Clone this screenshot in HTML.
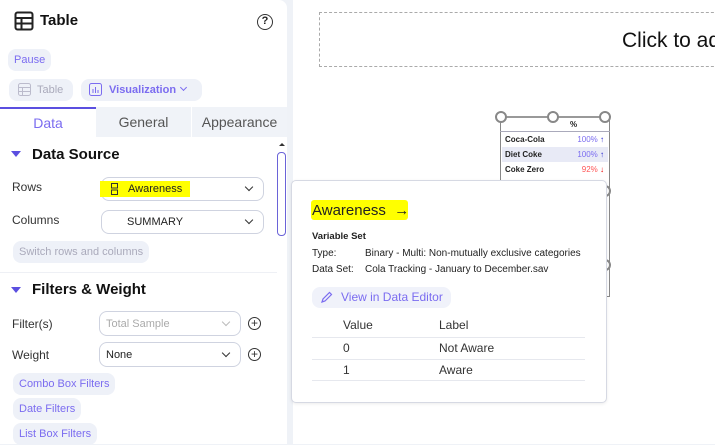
<!DOCTYPE html>
<html><head><style>
*{box-sizing:border-box;margin:0;padding:0}
body{width:715px;height:444px;overflow:hidden;background:#eff2f7;font-family:"Liberation Sans",sans-serif;position:relative;color:#222}
.abs{position:absolute}
.panel{left:0;top:0;width:287px;height:444px;background:#fff;border-radius:0 8px 0 0}
.canvas{left:293px;top:0;width:422px;height:444px;background:#fff}
.chip{position:absolute;background:#eef1f8;border-radius:8px;font-size:11px;color:#7b6cf0;padding:0 6px;line-height:22px}
.sel{position:absolute;border:1px solid #cfd3e0;border-radius:8px;height:24px;font-size:11px;line-height:22px;background:#fff}
.chev{position:absolute;right:11px;top:6px;width:6px;height:6px;border-right:1.5px solid #333;border-bottom:1.5px solid #333;transform:rotate(45deg)}
.lbl{position:absolute;font-size:12px;color:#333}
.plus{position:absolute;width:13px;height:13px;border:1.5px solid #333;border-radius:50%;font-size:12px;line-height:10px;text-align:center;color:#333}
.h{position:absolute;font-size:15px;font-weight:bold;color:#111}
.tri{position:absolute;width:0;height:0;border-left:5px solid transparent;border-right:5px solid transparent;border-top:6px solid #5b4fe0}
.hd{position:absolute;width:12px;height:12px;border:2px solid #888;border-radius:50%;background:#fff}
</style></head><body>
<div class="abs panel">
  <svg class="abs" style="left:14px;top:11px" width="20" height="20" viewBox="0 0 20 20"><rect x="1.5" y="1.5" width="17" height="17" rx="2" fill="none" stroke="#222" stroke-width="2"/><line x1="1.5" y1="7" x2="18.5" y2="7" stroke="#222" stroke-width="2"/><line x1="1.5" y1="12.5" x2="18.5" y2="12.5" stroke="#222" stroke-width="2"/><line x1="7.5" y1="7" x2="7.5" y2="18.5" stroke="#222" stroke-width="2"/></svg>
  <div class="abs" style="left:40px;top:12px;font-size:15px;font-weight:bold;color:#111">Table</div>
  <div class="abs" style="left:257px;top:14px;width:16px;height:16px;border:1.5px solid #333;border-radius:50%;font-size:11px;text-align:center;line-height:13px;font-weight:bold">?</div>
  <div class="chip" style="left:8px;top:49px;height:22px">Pause</div>
  <div class="chip" style="left:9px;top:79px;color:#aab;padding-left:28px;padding-right:10px;height:22px">Table</div>
  <svg class="abs" style="left:18px;top:83px" width="13" height="13"><rect x=".5" y=".5" width="12" height="12" rx="2" fill="none" stroke="#bbc"/><line x1="0" y1="4.5" x2="13" y2="4.5" stroke="#bbc"/><line x1="0" y1="8.5" x2="13" y2="8.5" stroke="#bbc"/><line x1="4.5" y1="4" x2="4.5" y2="13" stroke="#bbc"/></svg>
  <div class="chip" style="left:81px;top:79px;padding-left:28px;padding-right:26px;font-weight:bold;height:22px">Visualization</div>
  <svg class="abs" style="left:89px;top:83px" width="13" height="13"><rect x=".5" y=".5" width="12" height="12" rx="2" fill="none" stroke="#7b6cf0"/><line x1="4" y1="6" x2="4" y2="10" stroke="#7b6cf0"/><line x1="6.5" y1="4" x2="6.5" y2="10" stroke="#7b6cf0"/><line x1="9" y1="7" x2="9" y2="10" stroke="#7b6cf0"/></svg>
  <div class="abs" style="left:181px;top:85px;width:5px;height:5px;border-right:1.5px solid #7b6cf0;border-bottom:1.5px solid #7b6cf0;transform:rotate(45deg)"></div>
  <div class="abs" style="left:0;top:107px;width:96px;height:30px;border-top:2px solid #5b4fe0;background:#fff;font-size:14px;color:#7b6cf0;text-align:center;line-height:28px">Data</div>
  <div class="abs" style="left:96px;top:107px;width:95px;height:30px;background:#f0f3f8;font-size:14px;color:#555;text-align:center;line-height:30px">General</div>
  <div class="abs" style="left:192px;top:107px;width:95px;height:30px;background:#f0f3f8;font-size:14px;color:#555;text-align:center;line-height:30px">Appearance</div>
  <div class="abs" style="left:277px;top:140px;width:10px;height:150px"><div style="position:absolute;top:3px;width:0;height:0;border-left:3px solid transparent;border-right:3px solid transparent;border-bottom:3px solid #333;left:2px"></div><div style="position:absolute;left:0;top:12px;width:9px;height:84px;border:1.5px solid #6a63d8;border-radius:4px"></div></div>
  <div class="tri" style="left:11px;top:151px"></div>
  <div class="h" style="left:32px;top:146px">Data Source</div>
  <div class="lbl" style="left:12px;top:180px">Rows</div>
  <div class="sel" style="left:101px;top:177px;width:163px"><span style="position:absolute;left:-2px;top:3px;width:90px;height:16px;background:#ff0;"></span><svg style="position:absolute;left:9px;top:5px" width="7" height="12"><rect x=".5" y=".5" width="6" height="4.5" fill="none" stroke="#333"/><rect x=".5" y="7" width="6" height="4.5" fill="none" stroke="#333"/></svg><span style="position:absolute;left:26px;color:#222">Awareness</span><div class="chev"></div></div>
  <div class="lbl" style="left:12px;top:213px">Columns</div>
  <div class="sel" style="left:101px;top:210px;width:163px"><span style="position:absolute;left:25px;color:#222">SUMMARY</span><div class="chev"></div></div>
  <div class="chip" style="left:13px;top:241px;color:#aab;height:22px">Switch rows and columns</div>
  <div class="abs" style="left:0;top:272px;width:277px;height:1px;background:#eef0f5"></div>
  <div class="tri" style="left:11px;top:287px"></div>
  <div class="h" style="left:32px;top:281px">Filters &amp; Weight</div>
  <div class="lbl" style="left:12px;top:317px">Filter(s)</div>
  <div class="sel" style="left:99px;top:311px;width:142px;height:25px"><span style="position:absolute;left:6px;top:1px;color:#aaa">Total Sample</span><div class="chev" style="border-color:#bbb;top:7px"></div></div>
  <div class="plus" style="left:248px;top:317px">+</div>
  <div class="lbl" style="left:12px;top:348px">Weight</div>
  <div class="sel" style="left:99px;top:342px;width:142px;height:25px"><span style="position:absolute;left:6px;top:1px;color:#222">None</span><div class="chev" style="top:7px"></div></div>
  <div class="plus" style="left:248px;top:348px">+</div>
  <div class="chip" style="left:13px;top:373px">Combo Box Filters</div>
  <div class="chip" style="left:13px;top:398px">Date Filters</div>
  <div class="chip" style="left:13px;top:423px">List Box Filters</div>
</div>
<div class="abs canvas"></div>
<div class="abs" style="left:319px;top:12px;width:420px;height:55px;border:1px dashed #aaa"></div>
<div class="abs" style="left:622px;top:29px;font-size:21px;color:#111;white-space:nowrap">Click to add</div>
<div class="abs" style="left:500px;top:117px;width:110px;height:180px;border:1px solid #888;background:#fff"></div>
<div class="abs" style="left:507px;top:116px;width:96px;height:2px;background:#999"></div>
<div class="abs" style="left:500px;top:131px;width:110px;height:1px;background:#aab"></div>
<div class="abs" style="left:502px;top:132px;width:106px;font-size:8px;font-weight:bold">
 <div style="height:15px;line-height:15px;padding-left:3px">Coca-Cola<span style="float:right;font-weight:normal;color:#7b6cf0;margin-right:4px">100% <b style="color:#22c">↑</b></span></div>
 <div style="height:15px;line-height:15px;padding-left:3px;background:#e8eaf6">Diet Coke<span style="float:right;font-weight:normal;color:#7b6cf0;margin-right:4px">100% <b style="color:#22c">↑</b></span></div>
 <div style="height:15px;line-height:15px;padding-left:3px">Coke Zero<span style="float:right;font-weight:normal;color:#f55;margin-right:4px">92% <b style="color:#e00">↓</b></span></div>
</div>
<div class="abs" style="left:570px;top:120px;font-size:8px;font-weight:bold">%</div>
<div class="hd" style="left:495px;top:111px"></div><div class="hd" style="left:547px;top:111px"></div><div class="hd" style="left:599px;top:111px"></div>
<div class="hd" style="left:599px;top:185px"></div><div class="hd" style="left:599px;top:259px"></div>
<div class="abs" style="left:291px;top:180px;width:316px;height:223px;background:#fff;border:1px solid #d6d9e3;border-radius:5px;box-shadow:0 1px 3px rgba(0,0,0,.08)"></div>
<div class="abs" style="left:311px;top:200px;width:97px;height:20px;background:#ff0;border-radius:3px"></div>
<div class="abs" style="left:312px;top:202px;font-size:15px;color:#222">Awareness &nbsp;→</div>
<div class="abs" style="left:312px;top:231px;font-size:9.5px;font-weight:bold">Variable Set</div>
<div class="abs" style="left:312px;top:248px;font-size:10px">Type:</div>
<div class="abs" style="left:365px;top:248px;font-size:10px;white-space:nowrap">Binary - Multi: Non-mutually exclusive categories</div>
<div class="abs" style="left:312px;top:264px;font-size:10px">Data Set:</div>
<div class="abs" style="left:365px;top:264px;font-size:10px;white-space:nowrap">Cola Tracking - January to December.sav</div>
<div class="abs" style="left:312px;top:287px;width:139px;height:21px;background:#f0f2fa;border-radius:8px;font-size:12px;color:#7b6cf0;line-height:21px;padding-left:29px">View in Data Editor</div>
<svg class="abs" style="left:320px;top:291px" width="13" height="13"><path d="M2 11 L3 8 L9.5 1.5 L11.5 3.5 L5 10 Z" fill="none" stroke="#7b6cf0" stroke-width="1.2"/></svg>
<div class="abs" style="left:343px;top:318px;font-size:12px;color:#333">Value</div>
<div class="abs" style="left:439px;top:318px;font-size:12px;color:#333">Label</div>
<div class="abs" style="left:312px;top:337px;width:273px;height:1px;background:#e6e8ee"></div>
<div class="abs" style="left:343px;top:341px;font-size:12px;color:#333">0</div>
<div class="abs" style="left:439px;top:341px;font-size:12px;color:#333">Not Aware</div>
<div class="abs" style="left:312px;top:359px;width:273px;height:1px;background:#e6e8ee"></div>
<div class="abs" style="left:343px;top:363px;font-size:12px;color:#333">1</div>
<div class="abs" style="left:439px;top:363px;font-size:12px;color:#333">Aware</div>
<div class="abs" style="left:312px;top:380px;width:273px;height:1px;background:#e6e8ee"></div>
</body></html>
